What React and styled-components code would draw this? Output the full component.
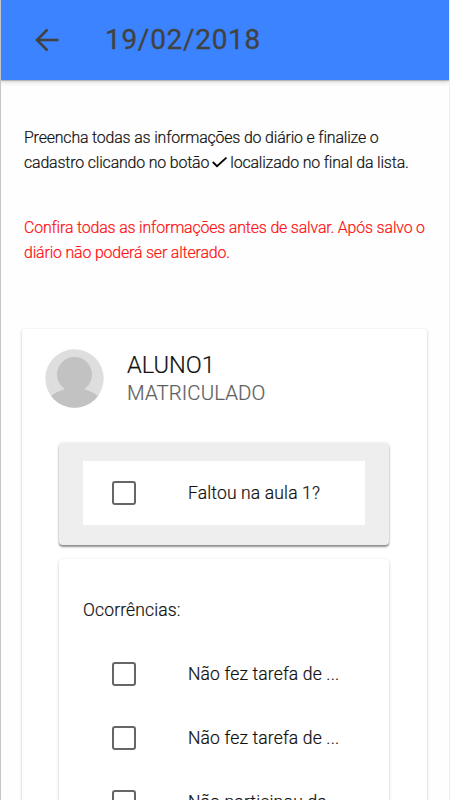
import React from 'react';
import styled, { createGlobalStyle } from "styled-components";

const GlobalStyle = createGlobalStyle`
  * {
    box-sizing: border-box;
  }

  body {
    margin: 0;
    background: #fefefe;
    font-family: Roboto, "Liberation Sans", sans-serif;
    overflow: hidden;
  }
`;

const Screen = styled.div`
  height: 800px;
  overflow: hidden;
  border-left: 1px solid rgba(0, 0, 0, 0.22);
  border-right: 1px solid #ececec;
`;

const Toolbar = styled.header`
  display: flex;
  align-items: center;
  height: 80px;
  margin: 0 -1px;
  padding-left: 28px;
  background: #3b83ff;
  border-left: 1px solid #3472dc;
  box-shadow: 0 1px 1px rgba(0, 0, 0, 0.2), 0 2px 5px rgba(0, 0, 0, 0.16);

  & > svg {
    display: block;
  }
`;

const Title = styled.h1`
  margin: 0 0 0 41px;
  color: #42423f;
  font-size: 28px;
  font-weight: 400;
  line-height: 32px;
  letter-spacing: 0.7px;
  -webkit-text-stroke: 0.3px #42423f;
`;

const Message = styled.p`
  margin: ${props => props.$warning ? "40px" : "45px"} 0 0 23px;
  color: ${props => props.$warning ? "#ff1010" : "#111"};
  font-size: 15.9px;
  font-weight: 300;
  line-height: 25px;
  letter-spacing: -0.16px;
  white-space: nowrap;
  -webkit-text-stroke: 0.2px currentColor;

  & > svg {
    margin: 0 2px 0 3px;
    vertical-align: 0;
  }
`;

const StudentCard = styled.section`
  height: 500px;
  margin: 64px 22px 0 21px;
  padding: 20px 38px 0 37px;
  background: #fff;
  border-radius: 3px;
  box-shadow: 0 1px 3px rgba(0, 0, 0, 0.24);
`;

const Student = styled.div`
  display: flex;
  margin-left: -14px;
  height: 94px;
`;

const StudentText = styled.div`
  margin-left: 23px;
`;

const Name = styled.h2`
  margin: 2px 0 0;
  color: #111;
  font-size: 23.6px;
  font-weight: 300;
  line-height: 28px;
  -webkit-text-stroke: 0.2px currentColor;
`;

const Status = styled.div`
  color: #606060;
  font-size: 20.4px;
  font-weight: 300;
  line-height: 29px;
  letter-spacing: 0.1px;
  -webkit-text-stroke: 0.2px currentColor;
`;

const Panel = styled.div`
  margin-bottom: 14px;
  padding: ${props => props.$shaded ? "18px 24px 20px" : "39px 24px"};
  background: ${props => props.$shaded ? "#eee" : "#fff"};
  border-radius: 4px;
  box-shadow: ${props => props.$shaded
    ? "0 2px 2px rgba(0, 0, 0, 0.42), 0 0 3px rgba(0, 0, 0, 0.12)"
    : "0 1px 3px rgba(0, 0, 0, 0.24)"};
`;

const PanelTitle = styled.div`
  height: 44px;
  color: #111;
  font-size: 17.5px;
  font-weight: 300;
  line-height: 24px;
  letter-spacing: 0.15px;
  -webkit-text-stroke: 0.2px currentColor;
`;

const Item = styled.label`
  display: flex;
  align-items: center;
  height: 64px;
  padding-left: 29px;
  background: #fff;
  color: #111;
  font-size: 17.5px;
  font-weight: 300;
  letter-spacing: 0.15px;
  white-space: nowrap;
  -webkit-text-stroke: 0.2px currentColor;
`;

const Checkbox = styled.input`
  appearance: none;
  width: 24px;
  height: 24px;
  margin: 0 52px 0 0;
  border: 2px solid #666;
  border-radius: 3px;
`;

const CheckItem = ({ children }) => (
    <Item>
        <Checkbox type="checkbox"/>
        <span>{children}</span>
    </Item>
);

const BackIcon = () => (
    <svg width="35" height="35" viewBox="0 0 35 35">
        <path d="M29.5 17H8M18.5 6.5L8 17l10.5 10.5" fill="none" stroke="#42423f" strokeWidth="2.6"/>
    </svg>
);

const CheckIcon = () => (
    <svg width="16" height="11" viewBox="0 0 16 11">
        <path d="M.8 5L5 9.2L14.5 .6" fill="none" stroke="#000" strokeWidth="1.8"/>
    </svg>
);

const Avatar = () => (
    <svg width="59" height="59" viewBox="0 0 59 59">
        <defs>
            <clipPath id="avatar">
                <circle cx="29.5" cy="29.5" r="29.2"/>
            </clipPath>
        </defs>
        <g clipPath="url(#avatar)">
            <rect width="59" height="59" fill="#dedede"/>
            <circle cx="29.5" cy="25.5" r="17.5" fill="#c2c2c2"/>
            <path d="M4 49C10 43 15 42 20 40Q29.5 37 39 40C44 42 49 43 55 49V59H4z" fill="#c2c2c2"/>
        </g>
    </svg>
);

const App = () => {
    return (
        <Screen>
            <GlobalStyle/>
            <Toolbar>
                <BackIcon/>
                <Title>19/02/2018</Title>
            </Toolbar>
            <Message>
                Preencha todas as informações do diário e finalize o<br/>
                cadastro clicando no botão<CheckIcon/>localizado no final da lista.
            </Message>
            <Message $warning>
                Confira todas as informações antes de salvar. Após salvo o<br/>
                diário não poderá ser alterado.
            </Message>
            <StudentCard>
                <Student>
                    <Avatar/>
                    <StudentText>
                        <Name>ALUNO1</Name>
                        <Status>MATRICULADO</Status>
                    </StudentText>
                </Student>
                <Panel $shaded>
                    <CheckItem>Faltou na aula 1?</CheckItem>
                </Panel>
                <Panel>
                    <PanelTitle>Ocorrências:</PanelTitle>
                    <CheckItem>Não fez tarefa de ...</CheckItem>
                    <CheckItem>Não fez tarefa de ...</CheckItem>
                    <CheckItem>Não participou da ...</CheckItem>
                </Panel>
            </StudentCard>
        </Screen>
    );
}

export default App;
